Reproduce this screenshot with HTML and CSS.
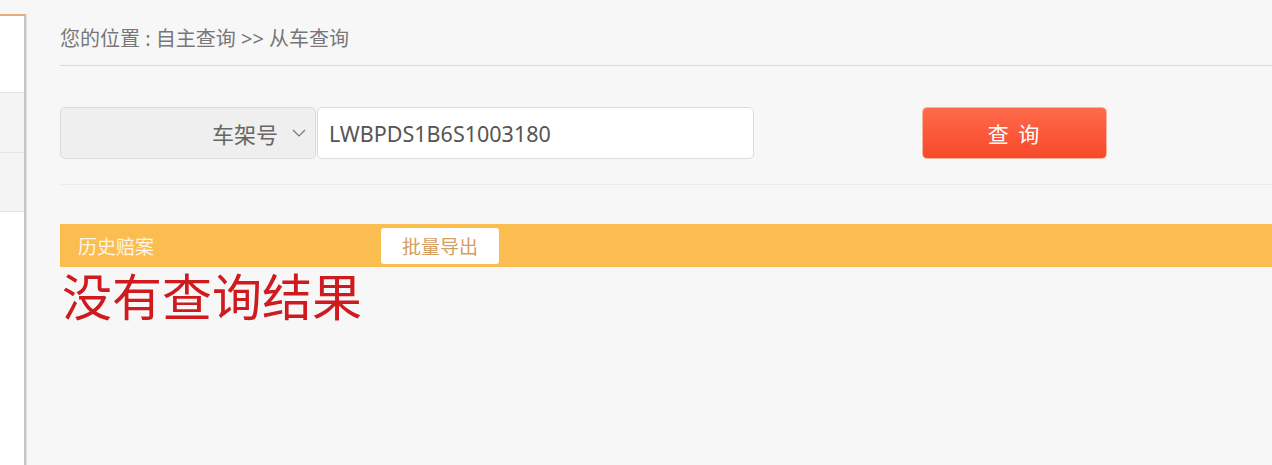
FILE: index.html
```html
<!DOCTYPE html>
<html lang="zh-CN">
<head>
    <meta charset="UTF-8">
    <title>从车查询</title>
    <link rel="stylesheet" href="styles.css">
</head>
<body>
    <div class="page">
        <aside class="sidebar">
            <div class="side-item"></div>
            <div class="side-item side-gray"></div>
            <div class="side-item side-gray"></div>
        </aside>

        <main class="content">
            <div class="breadcrumb">您的位置 : 自主查询 &gt;&gt; 从车查询</div>

            <form class="search-row">
                <div class="select-box">
                    <span>车架号</span>
                    <svg width="14" height="8" viewBox="0 0 14 8" fill="none" stroke="#777" stroke-width="1.2">
                        <polyline points="1 1 7 7 13 1"></polyline>
                    </svg>
                </div>
                <input class="vin-input" type="text" value="LWBPDS1B6S1003180">
                <button type="button" class="query-button">查 询</button>
            </form>

            <div class="result-bar">
                <span class="bar-title">历史赔案</span>
                <button type="button" class="export-button">批量导出</button>
            </div>
            <div class="empty-message">没有查询结果</div>
        </main>
    </div>
</body>
</html>
```

FILE: styles.css
```css
* {
    margin: 0;
    padding: 0;
    box-sizing: border-box;
    font-family: "Noto Sans", "Noto Sans CJK SC", sans-serif;
}

body {
    background-color: #f7f7f8;
    height: 465px;
    overflow: hidden;
}

.page {
    display: flex;
    height: 100%;
}

.sidebar {
    width: 26px;
    flex-shrink: 0;
    margin-top: 14px;
    background-color: #fff;
    border-top: 2px solid #e9ab7c;
    border-right: 2px solid #c6c6c6;
    box-shadow: 1px 0 0 #e2e2e2;
}

.side-item {
    height: 60px;
}

.side-item:first-child {
    height: 76px;
}

.side-gray {
    background-color: #f4f4f4;
    border-top: 1px solid #e6e6e6;
}

.side-gray + .side-gray {
    border-bottom: 1px solid #e6e6e6;
}

.content {
    flex: 1;
    padding-left: 34px;
}

.breadcrumb {
    height: 66px;
    padding-top: 26px;
    font-size: 20px;
    line-height: 26px;
    color: #777;
    border-bottom: 1px solid #d9d9d9;
}

.search-row {
    display: flex;
    align-items: center;
    margin-top: 41px;
    padding-bottom: 25px;
    border-bottom: 1px solid #ececec;
}

.select-box {
    width: 256px;
    height: 52px;
    display: flex;
    align-items: center;
    justify-content: flex-end;
    gap: 14px;
    padding-right: 9px;
    background-color: #efefef;
    border: 1px solid #dcdcdc;
    border-radius: 5px;
    font-size: 22px;
    color: #666;
}

.vin-input {
    width: 437px;
    height: 52px;
    margin-left: 1px;
    padding-left: 11px;
    background-color: #fff;
    border: 1px solid #dcdcdc;
    border-radius: 5px;
    font-size: 21.5px;
    color: #555;
    outline: none;
}

.query-button {
    width: 183px;
    height: 50px;
    margin-left: 169px;
    border: none;
    border-radius: 4px;
    background: linear-gradient(#ff6a4a, #f6492a);
    box-shadow: 0 0 0 1px #f7b3a0;
    color: #fff;
    font-size: 21px;
    letter-spacing: 2px;
}

.result-bar {
    height: 43px;
    margin-top: 39px;
    display: flex;
    align-items: center;
    background-color: #fbbd4f;
}

.bar-title {
    width: 321px;
    padding-left: 18px;
    font-size: 19px;
    color: #fff6e6;
}

.export-button {
    width: 118px;
    height: 36px;
    border: none;
    border-radius: 3px;
    background-color: #fff;
    font-size: 19px;
    color: #d59e63;
}

.empty-message {
    padding-left: 2px;
    font-size: 50px;
    line-height: 60px;
    color: #cf1b1e;
}
```
